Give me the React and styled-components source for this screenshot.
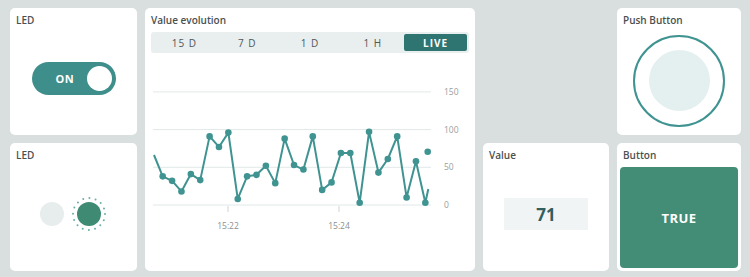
import React from 'react';
import styled, { createGlobalStyle } from 'styled-components';

const GlobalStyle = createGlobalStyle`
    html, body {
        margin: 0;
        padding: 0;
        background: #d9dfdf;
        font-family: "Open Sans", "Liberation Sans", sans-serif;
    }
`;

const Board = styled.div`
    display: grid;
    grid-template-columns: 127px 330px 126px 124px;
    grid-template-rows: 127px 128px;
    gap: 8px;
    padding: 8px 0 0 10px;
`;

const Card = styled.section`
    display: flex;
    flex-direction: column;
    background: #fff;
    border-radius: 5px;
    padding: 5px 6px;
    box-sizing: border-box;
    grid-column: ${p => p.$col};
    grid-row: ${p => p.$row};
`;

const Title = styled.h2`
    margin: 0;
    font-size: 10px;
    line-height: 14px;
    font-weight: 600;
    color: #4a5151;
`;

const Body = styled.div`
    flex: 1;
    display: flex;
    align-items: center;
    justify-content: center;
    gap: ${p => p.$gap || 0}px;
    padding-top: ${p => p.$top || 0}px;
`;

const Toggle = styled.div`
    width: 84px;
    height: 33px;
    border-radius: 17px;
    background: #3e8e8c;
    display: flex;
    align-items: center;
    justify-content: space-between;
    padding: 0 4px 0 24px;
    box-sizing: border-box;
    color: #fff;
    font-size: 11px;
    font-weight: 700;
    letter-spacing: 0.5px;
`;

const Knob = styled.span`
    width: 25px;
    height: 25px;
    border-radius: 50%;
    background: #fff;
`;

const Led = styled.span`
    width: 24px;
    height: 24px;
    border-radius: 50%;
    background: ${p => (p.$on ? '#3f8a72' : '#e7eded')};
`;

const LedRing = styled.div`
    position: relative;
    width: 36px;
    height: 36px;
    display: flex;
    align-items: center;
    justify-content: center;
`;

const Dots = styled.svg`
    position: absolute;
    inset: 0;
`;

const Tabs = styled.div`
    margin-top: 5px;
    height: 21px;
    display: grid;
    grid-template-columns: repeat(5, 1fr);
    padding: 2px;
    box-sizing: border-box;
    background: #e9eeee;
    border-radius: 3px;
`;

const Tab = styled.div`
    display: flex;
    align-items: center;
    justify-content: center;
    font-size: 10px;
    letter-spacing: 1px;
    border-radius: 2px;
    color: ${p => (p.$active ? '#fff' : '#505858')};
    background: ${p => (p.$active ? '#2e7471' : 'transparent')};
    font-weight: ${p => (p.$active ? 700 : 400)};
`;

const Chart = styled.svg`
    display: block;
    width: 318px;
    height: 212px;
    font-family: "Open Sans", "Liberation Sans", sans-serif;
`;

const ValueBox = styled.div`
    width: 84px;
    height: 32px;
    background: #f1f4f4;
    display: flex;
    align-items: center;
    justify-content: center;
    font-size: 17px;
    font-weight: 700;
    color: #2f5f5f;
`;

const PushRing = styled.div`
    width: 88px;
    height: 88px;
    border-radius: 50%;
    border: 2px solid #3f9391;
    display: flex;
    align-items: center;
    justify-content: center;
`;

const PushCore = styled.div`
    width: 61px;
    height: 61px;
    border-radius: 50%;
    background: #e3f0ef;
`;

const GreenBox = styled.div`
    flex: 1;
    margin: 5px -3px -2px;
    border-radius: 4px;
    background: #438d76;
    display: flex;
    align-items: center;
    justify-content: center;
    color: #fff;
    font-size: 13px;
    font-weight: 700;
    letter-spacing: 0.5px;
`;

const values = [38, 32, 18, 41, 33, 91, 77, 96, 8, 38, 40, 52, 29, 88, 53, 47, 91, 20, 30, 69, 69, 3, 97, 43, 61, 91, 10, 58, 3];
const toY = v => 205 - v * 0.754;
const points = values.map((v, i) => [161.7 + i * 9.38, toY(v)]);
const linePoints = [[153, 155], ...points, [427.3, 189]].map(p => p.join(',')).join(' ');
const grid = [150, 100, 50, 0];
const tabs = ['15 D', '7 D', '1 D', '1 H', 'LIVE'];

const ValueChart = () => (
    <Chart viewBox="150 53 318 212">
        {grid.map(g => (
            <g key={g}>
                <line x1="152" x2="430" y1={toY(g)} y2={toY(g)} stroke="#e2e8e8" strokeWidth="1" />
                <text x="443" y={toY(g) + 3} fontSize="8.5" fill="#9aa0a0">{g}</text>
            </g>
        ))}
        {[[227, '15:22'], [338, '15:24']].map(([x, label]) => (
            <g key={label}>
                <line x1={x} x2={x} y1="206" y2="212" stroke="#cfd5d5" strokeWidth="1" />
                <text x={x} y="229" fontSize="8.5" fill="#8a9090" textAnchor="middle">{label}</text>
            </g>
        ))}
        <polyline points={linePoints} fill="none" stroke="#3f9391" strokeWidth="2" strokeLinejoin="round" />
        {points.map(([x, y], i) => (
            <circle key={i} cx={x} cy={y} r="3.3" fill="#3f9391" />
        ))}
        <circle cx="426.7" cy="151.7" r="3.3" fill="#3f9391" />
    </Chart>
);

export default function App() {
    return (
        <>
            <GlobalStyle />
            <Board>
                <Card $col="1" $row="1">
                    <Title>LED</Title>
                    <Body>
                        <Toggle>ON<Knob /></Toggle>
                    </Body>
                </Card>
                <Card $col="1" $row="2">
                    <Title>LED</Title>
                    <Body $gap={7}>
                        <Led />
                        <LedRing>
                            <Dots width="36" height="36" viewBox="0 0 36 36">
                                <circle cx="18" cy="18" r="16" fill="none" stroke="#6aaea9" strokeWidth="2" strokeLinecap="round" strokeDasharray="0 6.28" />
                            </Dots>
                            <Led $on />
                        </LedRing>
                    </Body>
                </Card>
                <Card $col="2" $row="1 / span 2">
                    <Title>Value evolution</Title>
                    <Tabs>
                        {tabs.map(t => (
                            <Tab key={t} $active={t === 'LIVE'}>{t}</Tab>
                        ))}
                    </Tabs>
                    <ValueChart />
                </Card>
                <Card $col="3" $row="2">
                    <Title>Value</Title>
                    <Body>
                        <ValueBox>71</ValueBox>
                    </Body>
                </Card>
                <Card $col="4" $row="1">
                    <Title>Push Button</Title>
                    <Body $top={4}>
                        <PushRing><PushCore /></PushRing>
                    </Body>
                </Card>
                <Card $col="4" $row="2">
                    <Title>Button</Title>
                    <GreenBox>TRUE</GreenBox>
                </Card>
            </Board>
        </>
    );
}
